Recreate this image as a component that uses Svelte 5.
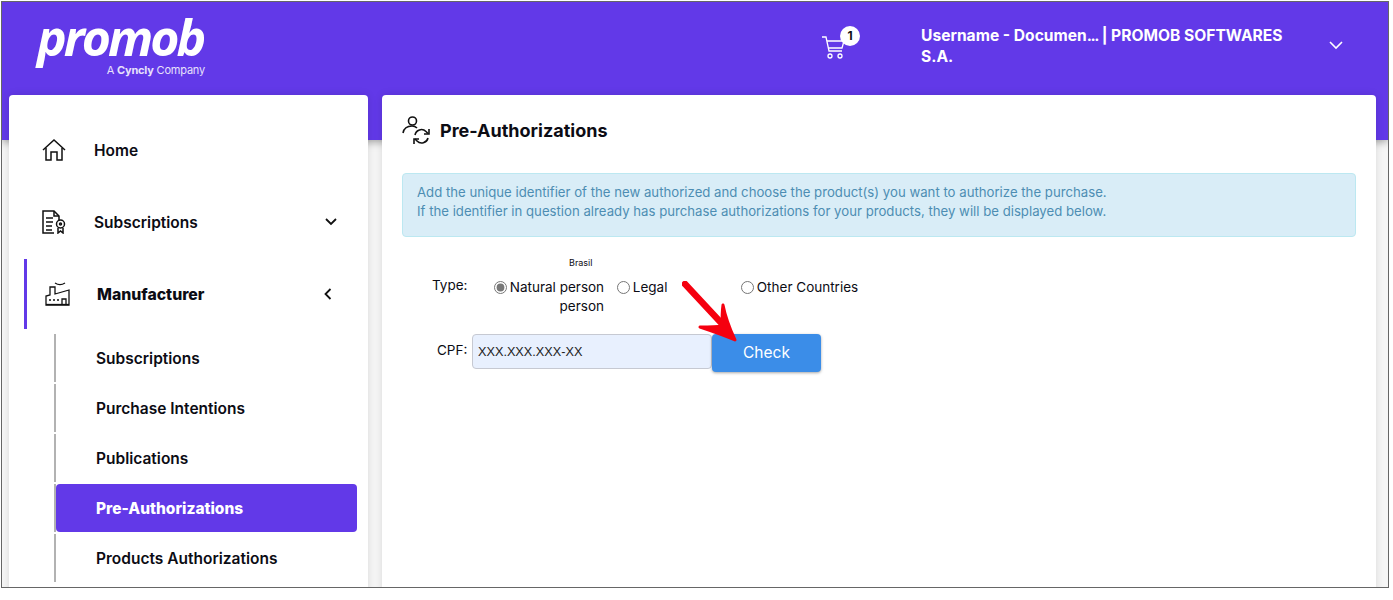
<script>
    const subItems = [
        { label: 'Subscriptions' },
        { label: 'Purchase Intentions' },
        { label: 'Publications' },
        { label: 'Pre-Authorizations', active: true },
        { label: 'Products Authorizations' }
    ];
</script>

<div class="frame">
    <header class="topbar">
        <div class="logo">
            <span class="logo-word">promob</span>
            <span class="logo-sub">A <b>Cyncly</b> Company</span>
        </div>
        <div class="cart">
            <svg width="26" height="28" viewBox="0 0 26 28" fill="none" stroke="#fff" stroke-width="1.3">
                <path d="M1 5h4l3 14h13" />
                <path d="M6 9h17l-2 7H7.5" />
                <circle cx="9" cy="24" r="2" />
                <circle cx="19" cy="24" r="2" />
            </svg>
            <span class="badge">1</span>
        </div>
        <div class="user">Username - Documen<span class="dots">...</span> | PROMOB SOFTWARES S.A.</div>
        <svg class="user-caret" width="16" height="10" viewBox="0 0 16 10" fill="none" stroke="#fff" stroke-width="1.6">
            <path d="M2 2l6 6 6-6" />
        </svg>
    </header>

    <div class="content">
        <aside class="sidebar">
            <div class="nav-row">
                <svg class="nav-icon" width="24" height="24" viewBox="0 0 24 24" fill="none" stroke="#111" stroke-width="1.5">
                    <path d="M1 12L12 2l11 10" />
                    <path d="M4 10v12h5v-8h6v8h5V10" />
                </svg>
                <span>Home</span>
            </div>
            <div class="nav-row">
                <svg class="nav-icon" width="24" height="24" viewBox="0 0 24 24" fill="none" stroke="#111" stroke-width="1.5">
                    <path d="M12 23H1V1h11l5 5v4" />
                    <path d="M12 1v5h5" />
                    <path d="M4 8h7M4 12h7M4 16h6M4 20h6" />
                    <circle cx="18.500" cy="14" r="4" />
                    <circle cx="18.500" cy="14" r="1" />
                    <path d="M16 18v5l2.500-2 2.500 2v-5" />
                </svg>
                <span>Subscriptions</span>
                <svg class="caret" width="12" height="8" viewBox="0 0 12 8" fill="none" stroke="#111" stroke-width="1.8">
                    <path d="M1 1l5 5 5-5" />
                </svg>
            </div>
            <div class="nav-row open">
                <svg class="nav-icon" width="26" height="26" viewBox="0 0 26 26" fill="none" stroke="#111" stroke-width="1.3">
                    <path d="M10 2c3 2 7 2 10 0" />
                    <path d="M1 24V15l4-1V6h5v7l14-4v15z" />
                    <path d="M17 24v-6h4v6" />
                    <path d="M4 19h2M8 19h2M12 19h2" />
                    <path d="M1 23.500h23" />
                </svg>
                <span>Manufacturer</span>
                <svg class="caret" width="8" height="12" viewBox="0 0 8 12" fill="none" stroke="#111" stroke-width="1.8">
                    <path d="M6.500 1l-5 5 5 5" />
                </svg>
            </div>
            <ul class="sub-list">
                {#each subItems as item}
                    <li class:active={item.active}><span>{item.label}</span></li>
                {/each}
            </ul>
        </aside>

        <main class="panel">
            <div class="title-row">
                <svg width="30" height="30" viewBox="0 0 30 30" fill="none" stroke="#111" stroke-width="1.6">
                    <circle cx="10.500" cy="6" r="4" />
                    <path d="M1 18c1-5 4-7 9-7 2 0 4 1 5 2" />
                    <path d="M13 20a6.500 6.500 0 0 1 11-3.500l2 2" />
                    <path d="M27 14v5h-5" />
                    <path d="M26 23a6.500 6.500 0 0 1-11 3l-2-2" />
                    <path d="M12 29v-5h5" />
                </svg>
                <h1>Pre-Authorizations</h1>
            </div>

            <div class="notice">
                Add the unique identifier of the new authorized and choose the product(s) you want to authorize the purchase.<br />
                If the identifier in question already has purchase authorizations for your products, they will be displayed below.
            </div>

            <div class="type-row">
                <span class="type-label">Type:</span>
                <div class="option natural">
                    <small>Brasil</small>
                    <label><input type="radio" name="kind" checked /> Natural person</label>
                    <span class="wrap">person</span>
                </div>
                <div class="option legal">
                    <label><input type="radio" name="kind" /> Legal</label>
                </div>
                <div class="option other">
                    <label><input type="radio" name="kind" /> Other Countries</label>
                </div>
            </div>

            <div class="cpf-row">
                <label for="cpf">CPF:</label>
                <input id="cpf" type="text" value="XXX.XXX.XXX-XX" />
                <button>Check</button>
            </div>

            <svg class="arrow" width="62" height="66" viewBox="0 0 62 66" fill="#f5000f" stroke="#f5000f" stroke-linejoin="round" stroke-linecap="round">
                <path d="M3 3L43 46" fill="none" stroke-width="6.500" />
                <path d="M41 24C43 34 47 46 53 59 42 54 30 50 18 46 26 46 34 46 40 45 40 38 40 31 41 24z" stroke-width="3" />
            </svg>
        </main>
    </div>
</div>

<style>
    :global(body) {
        margin: 0;
        background: #fff;
        font-family: Inter, "Liberation Sans", sans-serif;
    }

    .frame {
        margin: 1px 0 0 1px;
        width: 1386px;
        height: 585px;
        border: 1px solid #666;
        background: #f6f6f6;
        overflow: hidden;
        color: #0c0c14;
    }

    .topbar {
        display: flex;
        align-items: flex-start;
        height: 138px;
        background: #6239e8;
        box-shadow: 0 2px 8px rgba(0, 0, 0, 0.35);
        color: #fff;
    }
    .logo {
        display: flex;
        flex-direction: column;
        align-items: flex-end;
        width: 168px;
        margin: 8px 0 0 35px;
    }
    .logo-word {
        font-family: "Open Sans", sans-serif;
        font-size: 50px;
        font-weight: 700;
        font-style: italic;
        letter-spacing: -3px;
        line-height: 54px;
        width: 168px;
        white-space: nowrap;
    }
    .logo-sub {
        font-size: 11px;
        line-height: 12px;
        letter-spacing: -0.2px;
        opacity: 0.85;
    }
    .cart {
        position: relative;
        margin: 30px 0 0 616px;
        width: 26px;
    }
    .badge {
        position: absolute;
        top: -6px;
        left: 19px;
        width: 20px;
        height: 20px;
        border-radius: 50%;
        background: #fff;
        color: #111;
        font-size: 12px;
        font-weight: 700;
        line-height: 20px;
        text-align: center;
    }
    .user {
        width: 385px;
        margin: 23px 0 0 74px;
        font-size: 15.600px;
        font-weight: 700;
        line-height: 21px;
    }
    .dots {
        letter-spacing: -1.500px;
    }
    .user-caret {
        margin: 38px 0 0 22px;
    }

    .content {
        display: flex;
        gap: 14px;
        margin: -45px 0 0 7px;
        position: relative;
    }
    .sidebar,
    .panel {
        background: #fff;
        border-radius: 4px;
        height: 500px;
        box-shadow: 0 0 8px rgba(0, 0, 0, 0.12);
    }
    .sidebar {
        width: 359px;
        padding-top: 19px;
        box-sizing: border-box;
    }
    .nav-row {
        display: flex;
        align-items: center;
        height: 72px;
        padding: 0 31px 0 33px;
        font-size: 15.500px;
        font-weight: 600;
    }
    .nav-row .nav-icon {
        width: 24px;
        margin-right: 28px;
    }
    .nav-row .caret {
        margin-left: auto;
    }
    .nav-row.open {
        height: 70px;
        margin: 1px 0 1px 15px;
        padding: 0 36px 0 18px;
        border-left: 3px solid #6239e8;
        font-size: 15.800px;
        font-weight: 800;
    }
    .nav-row.open .nav-icon {
        width: 26px;
        margin-right: 26px;
    }

    .sub-list {
        list-style: none;
        margin: 5px 11px 0 45px;
        padding: 0;
    }
    .sub-list li {
        height: 48px;
        margin-bottom: 2px;
        border-left: 2px solid #b2b2b2;
        display: flex;
        align-items: center;
        font-size: 15.500px;
        font-weight: 600;
    }
    .sub-list li span {
        flex: 1;
        height: 48px;
        line-height: 50px;
        padding-left: 40px;
        border-radius: 4px;
    }
    .sub-list li.active {
        font-weight: 800;
        color: #fff;
    }
    .sub-list li.active span {
        background: #6239e8;
    }

    .panel {
        position: relative;
        width: 994px;
        box-sizing: border-box;
        padding: 19px 20px;
    }
    .title-row {
        display: flex;
        align-items: center;
        gap: 8px;
        height: 32px;
    }
    h1 {
        margin: 0;
        font-size: 18px;
        font-weight: 700;
    }
    .notice {
        margin-top: 27px;
        height: 64px;
        box-sizing: border-box;
        padding: 9px 14px;
        background: #d9edf7;
        border: 1px solid #bce8f1;
        border-radius: 4px;
        color: #4d8db3;
        font-size: 13.200px;
        line-height: 19px;
    }

    .type-row {
        display: flex;
        align-items: flex-start;
        margin-top: 19px;
        height: 78px;
        font-size: 13.500px;
    }
    .type-label {
        width: 62px;
        margin: 21px 0 0 30px;
    }
    .option {
        display: flex;
        flex-direction: column;
        margin-top: 23px;
    }
    .option input {
        width: 13px;
        height: 13px;
        margin: 0 -1px 0 0;
        vertical-align: -2px;
        accent-color: #777;
    }
    .natural {
        width: 123px;
        margin-top: 0;
    }
    .natural small {
        align-self: flex-start;
        margin-left: 75px;
        height: 23px;
        font-size: 9px;
        line-height: 14px;
    }
    .natural .wrap {
        width: 110px;
        text-align: right;
        line-height: 22px;
    }
    .legal {
        width: 124px;
    }

    .cpf-row {
        display: flex;
        align-items: flex-start;
        margin-left: 35px;
        font-size: 13.500px;
    }
    .cpf-row label {
        width: 35px;
        margin-top: 8px;
    }
    .cpf-row input {
        width: 240px;
        height: 35px;
        box-sizing: border-box;
        padding: 0 5px;
        border: 1px solid #c6c9d2;
        border-radius: 4px;
        background: #e8f0fe;
        font-family: "Liberation Sans", sans-serif;
        font-size: 12.700px;
        color: #222;
    }
    .cpf-row button {
        width: 109px;
        height: 38px;
        padding: 0 0 2px;
        border: none;
        border-radius: 4px;
        background: #3b8de8;
        color: #fff;
        font-family: inherit;
        font-size: 15.500px;
        box-shadow: 0 1px 3px rgba(0, 0, 0, 0.35);
    }

    .arrow {
        position: absolute;
        left: 300px;
        top: 186px;
    }
</style>
